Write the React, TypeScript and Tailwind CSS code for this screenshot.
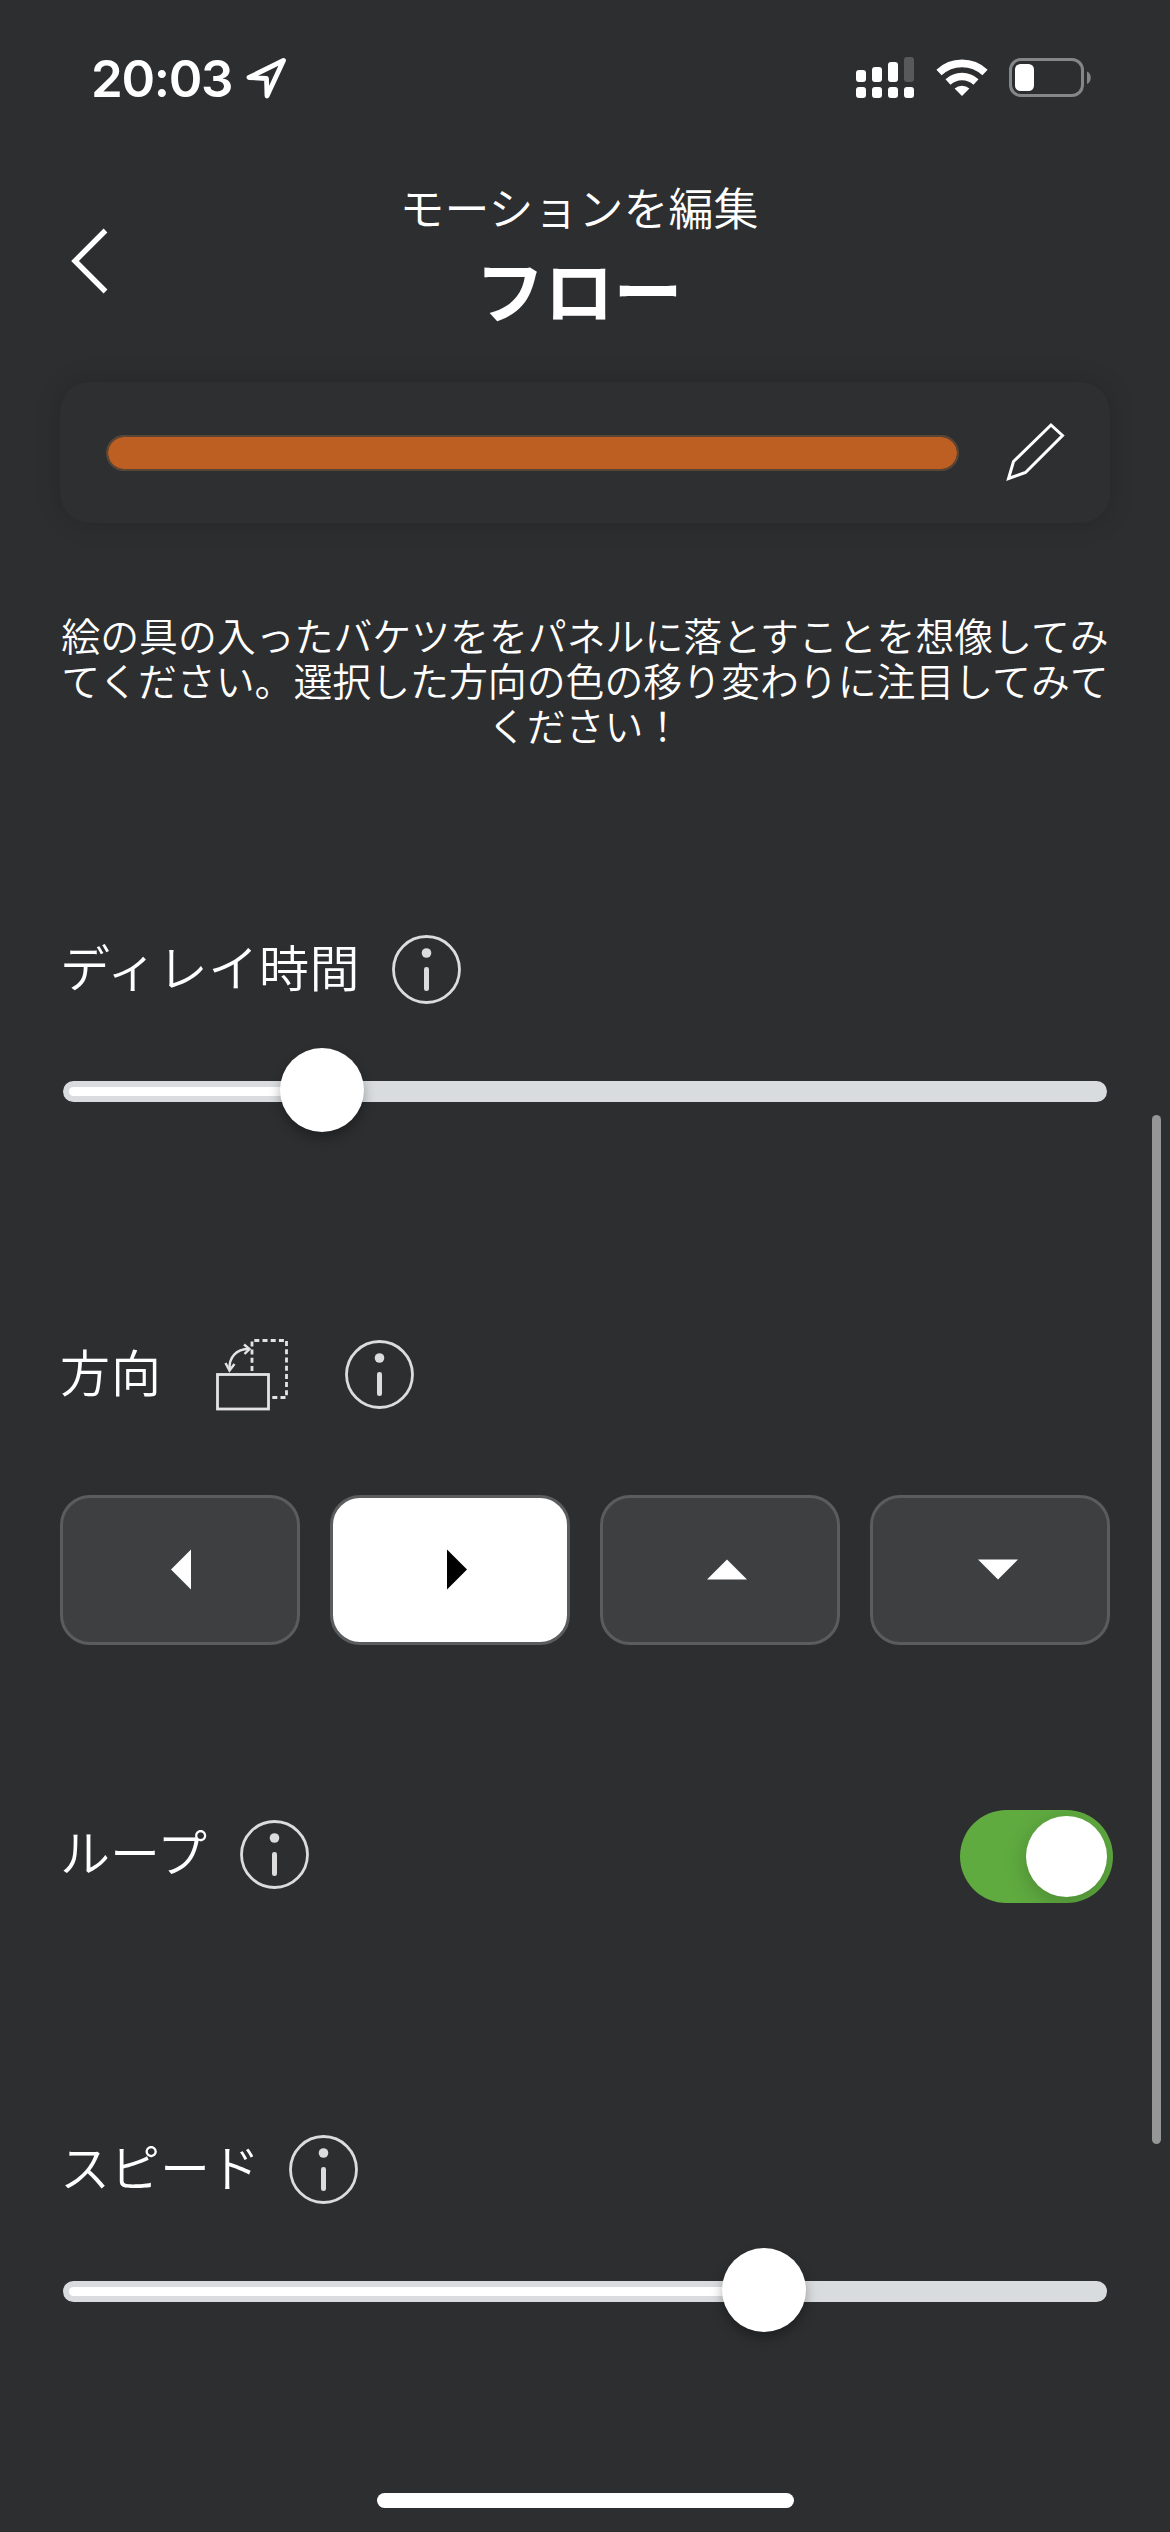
import { useState } from "react";

type Direction = "left" | "right" | "up" | "down";

// Triangles are drawn inside the full 240x150 key.
const ARROWS: { dir: Direction; points: string }[] = [
  { dir: "left", points: "131,54.5 131,94.5 111,74.5" },
  { dir: "right", points: "117,54.5 117,94.5 137,74.5" },
  { dir: "up", points: "107,84.5 147,84.5 127,64.5" },
  { dir: "down", points: "108,64.5 148,64.5 128,84.5" },
];

function StatusBar() {
  return (
    <div className="flex h-[156px] items-center pl-[91px] pr-[79px] text-white">
      <span className="w-[143px] whitespace-nowrap font-['Inter'] text-[51px] font-semibold leading-none tracking-[-1.3px]">20:03</span>
      <svg className="ml-[11px]" width="44" height="44" viewBox="0 0 44 44" fill="none" stroke="currentColor" strokeWidth="4.8" strokeLinejoin="round">
        <path d="M38.5 4.5 4 21.5 21.5 22.5 22 40Z" />
      </svg>
      <div className="flex-1" />
      <svg width="58" height="42" viewBox="0 0 58 42" fill="currentColor">
        <rect x="0" y="13" width="10" height="12" rx="3" />
        <rect x="16" y="10" width="10" height="15" rx="3" />
        <rect x="32" y="5" width="10" height="20" rx="3" />
        <rect x="48" y="0" width="10" height="25" rx="3" fill="#58595a" />
        <rect x="0" y="30" width="10" height="11" rx="3" />
        <rect x="16" y="30" width="10" height="11" rx="3" />
        <rect x="32" y="30" width="10" height="11" rx="3" />
        <rect x="48" y="30" width="10" height="11" rx="3" />
      </svg>
      <svg className="ml-[22px]" width="52" height="38" viewBox="0 0 52 38" fill="none" stroke="currentColor">
        <path d="M3 13.5A33.5 33.5 0 0 1 49 13.5" strokeWidth="7.6" />
        <path d="M12 23A20.5 20.5 0 0 1 40 23" strokeWidth="7.4" />
        <path d="M18.6 29.6A11 11 0 0 1 33.4 29.6L26 37Z" fill="currentColor" stroke="none" />
      </svg>
      <svg className="ml-[21px]" width="82" height="40" viewBox="0 0 82 40">
        <rect x="1.5" y="1.5" width="72" height="36" rx="10.5" fill="none" stroke="#858687" strokeWidth="3" />
        <rect x="6" y="6" width="19" height="27" rx="5.5" fill="#fff" />
        <path d="M78 13.5C83 15.5 83 24 78 26Z" fill="#858687" />
      </svg>
    </div>
  );
}

function InfoIcon() {
  return (
    <svg width="69" height="69" viewBox="0 0 69 69" className="shrink-0">
      <circle cx="34.5" cy="34.5" r="33" fill="none" stroke="#dcdcdd" strokeWidth="2.8" />
      <circle cx="34.5" cy="18" r="4.8" fill="#dcdcdd" />
      <rect x="32" y="32" width="5" height="24" rx="2.3" fill="#dcdcdd" />
    </svg>
  );
}

function RotateIcon() {
  return (
    <svg width="73" height="72" viewBox="0 0 73 72" fill="none" stroke="#e4e4e5" className="ml-[54px] mr-[56px]">
      <rect x="1.5" y="35.5" width="51" height="34.5" strokeWidth="2.8" />
      <path d="M36 32V1.5H70.5V58.5H54" strokeWidth="2.8" strokeDasharray="5 3.2" />
      <path d="M13.5 30.5C13 18 20 10 33 10" strokeWidth="2.4" />
      <path d="M28 5.5 33.5 10 28.5 15M9.5 24 13.5 31.5 18.5 25" strokeWidth="2.4" />
    </svg>
  );
}

function Label({ text, className = "", children }: { text: string; className?: string; children?: React.ReactNode }) {
  return (
    <div className="flex h-[69px] items-center">
      <span className={`whitespace-nowrap pb-[9px] text-[50px] font-[350] leading-none ${className}`}>{text}</span>
      {children ?? <div className="w-[29px]" />}
      <InfoIcon />
    </div>
  );
}

function Slider({ value }: { value: number }) {
  return (
    <div className="relative mx-[3px] mt-[77px] h-[21px] rounded-full bg-[#d9dcde] p-[6px]">
      <div className="h-[9px] rounded-full bg-white" style={{ width: value }} />
      <div
        className="absolute -top-[33px] size-[84px] -translate-x-1/2 rounded-full bg-white shadow-[0_6px_12px_rgba(0,0,0,0.3)]"
        style={{ left: value }}
      />
    </div>
  );
}

export default function App() {
  const [direction, setDirection] = useState<Direction>("right");
  const [loop, setLoop] = useState(true);

  return (
    <div className="relative flex h-[2532px] w-[1170px] flex-col overflow-hidden bg-[#2d2e30] font-['Noto_Sans_CJK_JP',sans-serif] text-white">
      <StatusBar />

      <header className="flex h-[226px] pt-[19px]">
        <button className="ml-[70px] mt-[53px] h-[66px] w-[40px]">
          <svg width="40" height="66" viewBox="0 0 40 66" fill="none" stroke="currentColor" strokeWidth="5.4">
            <path d="M35.5 2.5 5 33 35.5 63.5" />
          </svg>
        </button>
        <div className="ml-[109px] w-[720px] text-center">
          <p className="h-[64px] text-[45px] font-[350] leading-[64px]">モーションを編集</p>
          <h1 className="mt-[7px] text-[69px] font-bold leading-[84px]">フロー</h1>
        </div>
      </header>

      <main className="px-[60px]">
        <section className="flex h-[141px] items-center rounded-[30px] bg-[#2e2f31] pl-[46px] shadow-[0_0_26px_rgba(0,0,0,0.16)]">
          <div className="h-[36px] w-[853px] rounded-full border-2 border-[#5a4636] bg-[#bd5f22] bg-clip-padding" />
          <svg className="ml-[46px]" width="62" height="62" viewBox="0 0 62 62" fill="none" stroke="#fff" strokeWidth="3">
            <path d="M46 3 57.5 13.5 20.5 50.5 3.5 56.5 8.5 39.5Z" />
          </svg>
        </section>

        <p className="mt-[89px] whitespace-nowrap text-center text-[38.88px] font-[350] leading-[45px]">
          絵の具の入ったバケツををパネルに落とすことを想像してみ
          <br />
          てください。選択した方向の色の移り変わりに注目してみて
          <br />
          ください！
        </p>

        <section className="mt-[188px]">
          <Label text="ディレイ時間" className="w-[303px] tracking-[0.6px]" />
          <Slider value={259} />
        </section>

        <section className="mt-[238px]">
          <Label text="方向" className="tracking-[1px]">
            <RotateIcon />
          </Label>
          <div className="mt-[86px] grid grid-cols-4 gap-[30px]">
            {ARROWS.map(({ dir, points }) => (
              <button
                key={dir}
                onClick={() => setDirection(dir)}
                className={`h-[150px] overflow-hidden rounded-[30px] border-[3px] border-[#5b5c5d] ${
                  dir === direction ? "bg-white text-black" : "bg-[#3e3f41] text-white"
                }`}
              >
                <svg className="-m-[3px]" width="240" height="150" viewBox="0 0 240 150">
                  <polygon points={points} fill="currentColor" />
                </svg>
              </button>
            ))}
          </div>
        </section>

        <section className="-mr-[3px] mt-[165px] flex h-[93px] justify-between">
          <div className="pt-[10px]">
            <Label text="ループ" className="w-[151px]" />
          </div>
          <button
            onClick={() => setLoop(!loop)}
            className={`flex h-[93px] w-[153px] items-center overflow-hidden rounded-full p-[6px] ${
              loop ? "justify-end bg-[#5fab40]" : "justify-start bg-[#58595a]"
            }`}
          >
            <span className="size-[81px] rounded-full bg-white shadow-[0_6px_22px_rgba(0,0,0,0.2)]" />
          </button>
        </section>

        <section className="mt-[232px]">
          <Label text="スピード" />
          <Slider value={701} />
        </section>
      </main>

      {/* scroll bar and home indicator float over the page */}
      <div className="absolute right-[9px] top-[1115px] h-[1029px] w-[9px] rounded-full bg-[#959695]" />
      <div className="absolute bottom-[24px] left-[377px] h-[15px] w-[417px] rounded-full bg-white" />
    </div>
  );
}
